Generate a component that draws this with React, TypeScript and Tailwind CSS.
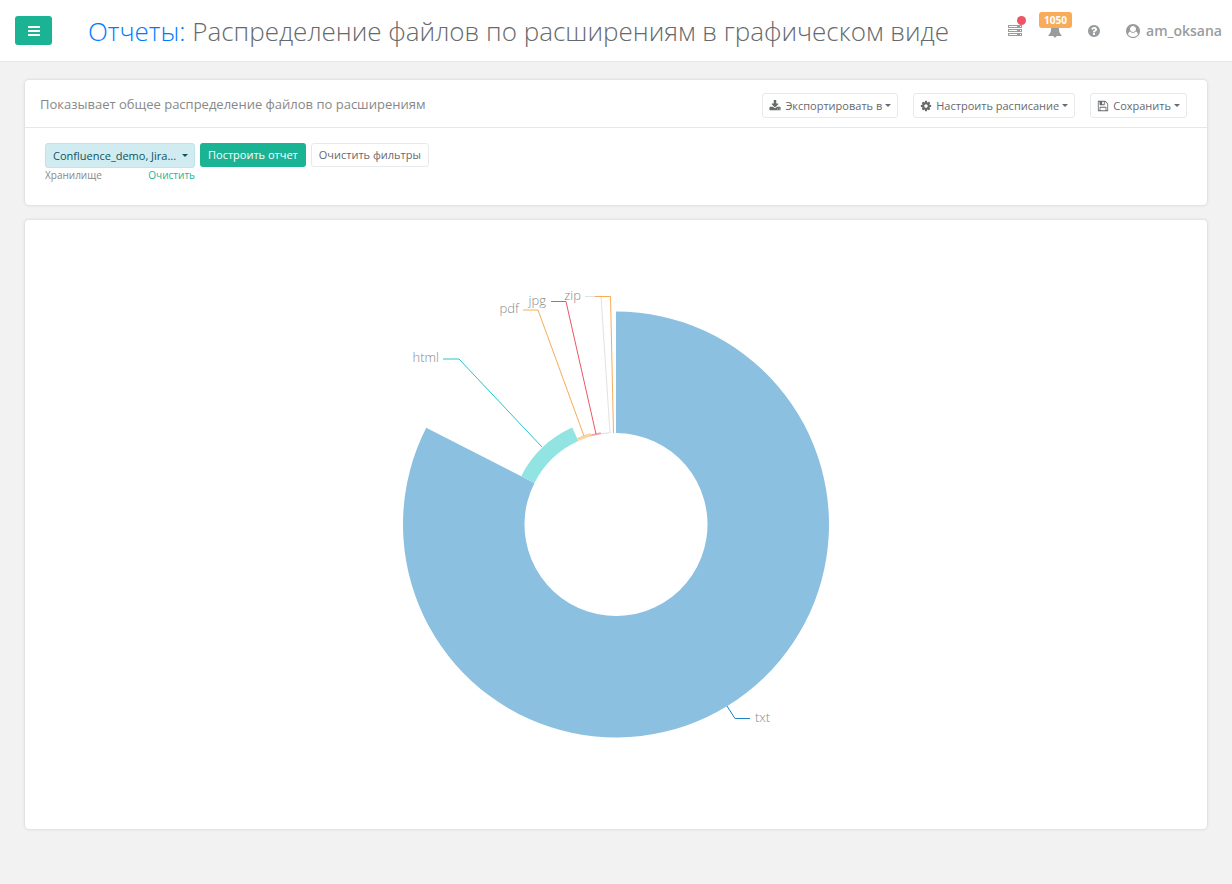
import React from "react";

const icons = {
  download:
    "M1344 1344q0-26-19-45t-45-19-45 19-19 45 19 45 45 19 45-19 19-45zm256 0q0-26-19-45t-45-19-45 19-19 45 19 45 45 19 45-19 19-45zm128-224v320q0 40-28 68t-68 28h-1472q-40 0-68-28t-28-68v-320q0-40 28-68t68-28h465l135 136q58 56 136 56t136-56l136-136h464q40 0 68 28t28 68zm-325-569q17 41-14 70l-448 448q-18 19-45 19t-45-19l-448-448q-31-29-14-70 17-39 59-39h256v-448q0-26 19-45t45-19h256q26 0 45 19t19 45v448h256q42 0 59 39z",
  cog: "M1152 896q0-106-75-181t-181-75-181 75-75 181 75 181 181 75 181-75 75-181zm512-109v222q0 12-8 23t-20 13l-185 28q-19 54-39 91 35 50 107 138 10 12 10 25t-9 23q-27 37-99 108t-94 71q-12 0-26-9l-138-108q-44 23-91 38-16 136-29 186-7 28-36 28h-222q-14 0-24.5-8.5t-11.5-21.5l-28-184q-49-16-90-37l-141 107q-10 9-25 9-14 0-25-11-126-114-165-168-7-10-7-23 0-12 8-23 15-21 51-66.5t54-70.5q-27-50-41-99l-183-27q-13-2-21-12.5t-8-23.5v-222q0-12 8-23t19-13l186-28q14-46 39-92-40-57-107-138-10-12-10-24 0-10 9-23 26-36 98.5-107.5t94.5-71.5q13 0 26 10l138 107q44-23 91-38 16-136 29-186 7-28 36-28h222q14 0 24.5 8.5t11.5 21.5l28 184q49 16 90 37l142-107q9-9 24-9 13 0 25 10 129 119 165 170 7 8 7 22 0 12-8 23-15 21-51 66.5t-54 70.5q26 50 41 98l183 28q13 2 21 12.5t8 23.5z",
  save: "M512 1536h768v-384h-768v384zm896 0h128v-896q0-14-10-38.5t-20-34.5l-281-281q-10-10-34-20t-39-10v416q0 40-28 68t-68 28h-576q-40 0-68-28t-28-68v-416h-128v1280h128v-416q0-40 28-68t68-28h832q40 0 68 28t28 68v416zm-384-928v-320q0-13-9.5-22.5t-22.5-9.5h-192q-13 0-22.5 9.5t-9.5 22.5v320q0 13 9.5 22.5t22.5 9.5h192q13 0 22.5-9.5t9.5-22.5zm640 32v928q0 40-28 68t-68 28h-1344q-40 0-68-28t-28-68v-1344q0-40 28-68t68-28h928q40 0 88 20t76 48l280 280q28 28 48 76t20 88z",
  question:
    "M1024 1376v-192q0-14-9-23t-23-9h-192q-14 0-23 9t-9 23v192q0 14 9 23t23 9h192q14 0 23-9t9-23zm256-672q0-88-55.5-163t-138.5-116-170-41q-243 0-371 213-15 24 8 42l132 100q7 6 19 6 16 0 25-12 53-68 86-92 34-24 86-24 48 0 85.5 26t37.5 59q0 38-20 61t-68 45q-63 28-115.5 86.5t-52.5 125.5v36q0 14 9 23t23 9h192q14 0 23-9t9-23q0-19 21.5-49.5t54.5-49.5q32-18 49-28.5t46-35 44.5-48 28-60.5 12.5-81zm384 192q0 209-103 385.5t-279.5 279.5-385.5 103-385.5-103-279.5-279.5-103-385.5 103-385.5 279.5-279.5 385.5-103 385.5 103 279.5 279.5 103 385.5z",
  user: "M1523 1339q-22-155-87.5-257.5t-184.5-118.5q-67 74-159.5 115.5t-195.5 41.5-195.5-41.5-159.5-115.5q-119 16-184.5 118.5t-87.5 257.5q106 150 271 237.5t356 87.5 356-87.5 271-237.5zm-243-699q0-159-112.5-271.5t-271.5-112.5-271.5 112.5-112.5 271.5 112.5 271.5 271.5 112.5 271.5-112.5 112.5-271.5zm512 256q0 182-71 347.5t-190.500 286-285.500 191.500-349 71q-182 0-348-71t-286-191-191-286-71-348 71-348 191-286 286-191 348-71 348 71 286 191 191 286 71 348z",
};

const Glyph = ({ path, className }: { path: string; className?: string }) => (
  <svg viewBox="0 0 1792 1792" fill="currentColor" className={className}>
    <path d={path} />
  </svg>
);

const Caret = ({ className }: { className?: string }) => (
  <svg viewBox="0 0 6 3" fill="currentColor" className={className}>
    <path d="M0 0h6L3 3z" />
  </svg>
);

const MenuButton = ({ icon, label }: { icon: string; label: string }) => (
  <button
    type="button"
    aria-haspopup="menu"
    className="flex h-[25px] items-center rounded-[3px] border border-[#e7eaec] bg-white px-[6px] text-[11px] leading-[18px] whitespace-nowrap text-[#676a6c]"
  >
    <Glyph path={icon} className="mr-1 h-3 w-3" />
    {label}
    <Caret className="ml-[3px] h-[3px] w-[6px]" />
  </button>
);

// Rose chart: angles are clockwise from the top, in degrees
const CX = 250;
const CY = 304.5;
const INNER = 91.5;

const slices = [
  { name: "txt", from: 0, to: 297, radius: 213, fill: "#8cc0e0" },
  { name: "html", from: 297, to: 335.7, radius: 106.5, fill: "#92e4e2" },
  { name: "pdf", from: 335.7, to: 344.4, radius: 95, fill: "#fcd3a5" },
  { name: "jpg", from: 344.4, to: 350.6, radius: 93.5, fill: "#f6a2ab" },
  { name: "zip", from: 350.6, to: 356, radius: 92.5, fill: "#dcdcee" },
  { name: "other", from: 356, to: 360, radius: 92, fill: "#f0f0f5" },
];

const leaders = [
  { points: "361,486 369,498.5 384,498.5", color: "#1c84c6" },
  { points: "176,227 93,139 77,139", color: "#23c6c8" },
  { points: "218,216 172,90 157,90", color: "#f8ac59" },
  { points: "230,214 200,81.5 185,81.5", color: "#ed5565" },
  { points: "244,213 235,76.5 219,76.5", color: "#e2e2e2" },
  { points: "247.5,213 244.5,76.5 229,76.5", color: "#f8ac59" },
];

const labels = [
  { text: "txt", x: 389, y: 502, anchor: "start" as const },
  { text: "html", x: 73, y: 142, anchor: "end" as const },
  { text: "pdf", x: 153, y: 93, anchor: "end" as const },
  { text: "jpg", x: 180, y: 85, anchor: "end" as const },
  { text: "zip", x: 215, y: 80, anchor: "end" as const },
];

const slicePath = (from: number, to: number, radius: number) => {
  const point = (deg: number, r: number) => {
    const a = (deg * Math.PI) / 180;
    return `${CX + r * Math.sin(a)} ${CY - r * Math.cos(a)}`;
  };
  const large = to - from > 180 ? 1 : 0;
  return `M${point(from, INNER)}L${point(from, radius)}A${radius} ${radius} 0 ${large} 1 ${point(to, radius)}L${point(to, INNER)}A${INNER} ${INNER} 0 ${large} 0 ${point(from, INNER)}Z`;
};

const ExtensionsChart = () => (
  <svg
    viewBox="0 0 500 609"
    className="h-[609px] w-[500px]"
    role="img"
    aria-label="Распределение файлов по расширениям"
  >
    {slices.map((s) => (
      <path key={s.name} d={slicePath(s.from, s.to, s.radius)} fill={s.fill} />
    ))}
    {leaders.map((l) => (
      <polyline key={l.points} points={l.points} fill="none" stroke={l.color} />
    ))}
    {labels.map((l) => (
      <text
        key={l.text}
        x={l.x}
        y={l.y}
        textAnchor={l.anchor}
        fontSize="13"
        fontWeight="300"
        fill="#888"
      >
        {l.text}
      </text>
    ))}
  </svg>
);

const Header = () => (
  <header className="flex h-[62px] items-center border-b border-[#e7e7e7] bg-white pr-[10px] pl-[15px] text-[#999c9e]">
    <button
      type="button"
      aria-label="Меню"
      className="flex h-[29px] w-[37px] shrink-0 items-center justify-center rounded-[3px] bg-[#1ab394] text-white"
    >
      <svg viewBox="0 0 12 10" fill="currentColor" className="h-[10px] w-3">
        <path d="M0 0h12v2H0zM0 4h12v2H0zM0 8h12v2H0z" />
      </svg>
    </button>
    <h1 className="ml-9 text-[26px] leading-[30px] font-light whitespace-nowrap text-[#676a6c]">
      <a href="#reports" className="text-[#007bff]">
        Отчеты:
      </a>{" "}
      Распределение файлов по расширениям в графическом виде
    </h1>
    <nav className="ml-auto flex items-center">
      <a href="#tasks" aria-label="Задачи" className="relative">
        <svg viewBox="0 0 14 11" fill="currentColor" className="h-[11px] w-[14px]">
          <path
            fillRule="evenodd"
            d="M0 0h14v3H0zM1 1v1h8V1zM12 1v1h1V1zM0 4h14v3H0zM1 5v1h8V5zM12 5v1h1V5zM0 8h14v3H0zM1 9v1h8V9zM12 9v1h1V9z"
          />
        </svg>
        <span className="absolute -top-[9px] left-[9px] h-[9px] w-[9px] rounded-full bg-[#ed5565]" />
      </a>
      <a href="#notifications" className="relative ml-[26px]">
        <svg viewBox="0 0 14 14" fill="currentColor" className="h-[14px] w-[14px]">
          <path d="M7 0c.6 0 1 .4 1 1 2 .4 3 2 3 4 0 3 1 5 2.500 6v1H8.500a1.500 1.500 0 0 1-3 0H.5v-1C2 10 3 8 3 5c0-2 1-3.600 3-4 0-.6.4-1 1-1z" />
        </svg>
        <span className="absolute -top-3 -left-[9px] h-4 rounded-[3px] bg-[#f8ac59] px-[5px] text-[10px] leading-4 font-bold text-white">
          1050
        </span>
      </a>
      <a href="#help" aria-label="Помощь" className="ml-[25px]">
        <Glyph path={icons.question} className="h-[14px] w-[14px]" />
      </a>
      <a href="#profile" className="ml-[25px] flex items-center text-[14px] leading-5 font-semibold">
        <Glyph path={icons.user} className="mr-[6px] h-[14px] w-[14px]" />
        am_oksana
      </a>
    </nav>
  </header>
);

export default function App() {
  return (
    <div className="min-h-screen bg-[#f2f2f2] font-['Open_Sans',sans-serif]">
      <Header />
      <main className="flex flex-col gap-[15px] px-[25px] pt-[18px] pb-[55px]">
        <section className="rounded-[4px] bg-white shadow-[0_0_3px_#c4c8d0]">
          <div className="flex h-12 items-start justify-between border-b border-[#e7e7e7] pt-[13px] pr-5 pl-[15px]">
            <h2 className="text-[13px] leading-[22px] text-[#888]">
              Показывает общее распределение файлов по расширениям
            </h2>
            <div className="flex gap-[15px]">
              <MenuButton icon={icons.download} label="Экспортировать в" />
              <MenuButton icon={icons.cog} label="Настроить расписание" />
              <MenuButton icon={icons.save} label="Сохранить" />
            </div>
          </div>
          <form className="flex items-start gap-[5px] px-5 pt-[15px] pb-[22px] text-[11px] leading-[18px]">
            <div className="w-[150px]">
              <div className="relative">
                <select
                  id="storage"
                  className="block h-[25px] w-full appearance-none rounded-[3px] border border-[#bee5eb] bg-[#d1ecf1] px-[7px] text-[#0c5460]"
                >
                  <option>Confluence_demo, Jira...</option>
                </select>
                <Caret className="pointer-events-none absolute top-[11px] right-[7px] h-[3px] w-[6px] text-[#0c5460]" />
              </div>
              <div className="flex justify-between text-[10px] leading-[15px] text-[#888]">
                <label htmlFor="storage">Хранилище</label>
                <a href="#clear" className="text-[#1ab394]">
                  Очистить
                </a>
              </div>
            </div>
            <button type="button" className="h-6 rounded-[3px] bg-[#1ab394] px-2 text-white">
              Построить отчет
            </button>
            <button
              type="button"
              className="h-6 rounded-[3px] border border-[#e7eaec] bg-white px-[7px] text-[#676a6c]"
            >
              Очистить фильтры
            </button>
          </form>
        </section>
        <section className="flex justify-center rounded-[4px] bg-white shadow-[0_0_3px_#c4c8d0]">
          <ExtensionsChart />
        </section>
      </main>
    </div>
  );
}
